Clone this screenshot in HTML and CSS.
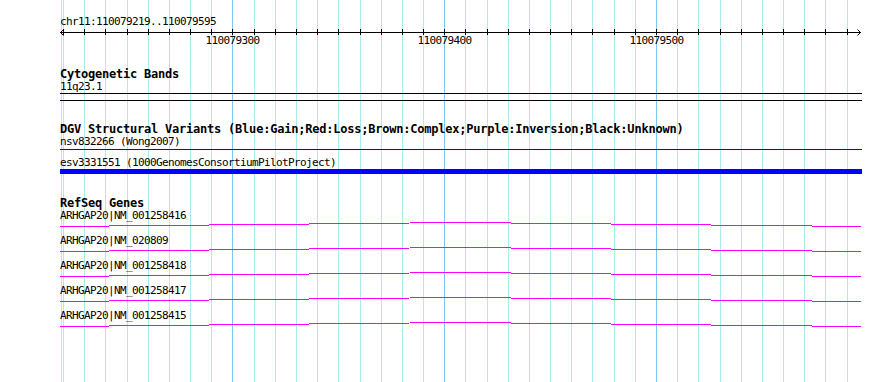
FILE: index.html
```html
<!DOCTYPE html>
<html lang="en">
  <head>
    <meta charset="UTF-8" />
    <meta name="viewport" content="width=device-width, initial-scale=1.0" />
    <title>chr11:110079219..110079595</title>

    <link rel="stylesheet" href="styles.css">
  </head>
  <body>
    <div class="panel">
      <!-- grid: one line every 10 bp, darker every 100 bp -->
      <svg class="grid" width="890" height="382" viewBox="0 0 890 382">
        <path class="minor" d="M61.5 0V382M63.5 0V382M84.5 0V382M105.5 0V382M127.5 0V382M148.5 0V382M169.5 0V382M190.5 0V382M211.5 0V382M254.5 0V382M275.5 0V382M296.5 0V382M317.5 0V382M338.5 0V382M360.5 0V382M381.5 0V382M402.5 0V382M423.5 0V382M465.5 0V382M487.5 0V382M508.5 0V382M529.5 0V382M550.5 0V382M571.5 0V382M592.5 0V382M614.5 0V382M635.5 0V382M677.5 0V382M698.5 0V382M720.5 0V382M741.5 0V382M762.5 0V382M783.5 0V382M804.5 0V382M825.5 0V382M847.5 0V382" />
        <path class="major" d="M232.5 0V382M444.5 0V382M656.5 0V382" />
      </svg>

      <div class="tracks">
        <div class="ruler-track">
          <div class="label">chr11:110079219..110079595</div>
          <svg class="ruler" width="802" height="19" viewBox="60 0 802 19">
            <path class="axis" d="M60 4.5H861" />
            <path class="axis" d="M63.5 1v6M84.5 1v6M105.5 1v6M127.5 1v6M148.5 1v6M169.5 1v6M190.5 1v6M211.5 1v6M232.5 1v6M254.5 1v6M275.5 1v6M296.5 1v6M317.5 1v6M338.5 1v6M360.5 1v6M381.5 1v6M402.5 1v6M423.5 1v6M444.5 1v6M465.5 1v6M487.5 1v6M508.5 1v6M529.5 1v6M550.5 1v6M571.5 1v6M592.5 1v6M614.5 1v6M635.5 1v6M656.5 1v6M677.5 1v6M698.5 1v6M720.5 1v6M741.5 1v6M762.5 1v6M783.5 1v6M804.5 1v6M825.5 1v6M847.5 1v6" />
            <path class="arrow" d="M63.5 1.5L60.5 4.5L63.5 7.5M857.5 1.5L860.5 4.5L857.5 7.5" />
            <text class="tick-label" x="232.5" y="16">110079300</text>
            <text class="tick-label" x="444.5" y="16">110079400</text>
            <text class="tick-label" x="656.5" y="16">110079500</text>
          </svg>
        </div>

        <section class="track cyto">
          <div class="title">Cytogenetic Bands</div>
          <div class="label">11q23.1</div>
          <div class="band"></div>
        </section>

        <section class="track dgv">
          <div class="title">DGV Structural Variants (Blue:Gain;Red:Loss;Brown:Complex;Purple:Inversion;Black:Unknown)</div>
          <div class="label">nsv832266 (Wong2007)</div>
          <div class="variant-row"><div class="variant-thin"></div></div>
          <div class="label">esv3331551 (1000GenomesConsortiumPilotProject)</div>
          <div class="variant-bar"></div>
        </section>

        <section class="track refseq">
          <div class="title">RefSeq Genes</div>
          <div class="gene">
            <div class="label">ARHGAP20|NM_001258416</div>
            <svg class="intron" width="802" height="13" viewBox="60 0 802 13"><polyline points="60,4.5 460,0.5 861,4.5" /></svg>
          </div>
          <div class="gene">
            <div class="label">ARHGAP20|NM_020809</div>
            <svg class="intron" width="802" height="13" viewBox="60 0 802 13"><polyline points="60,4.5 460,0.5 861,4.5" /></svg>
          </div>
          <div class="gene">
            <div class="label">ARHGAP20|NM_001258418</div>
            <svg class="intron" width="802" height="13" viewBox="60 0 802 13"><polyline points="60,4.5 460,0.5 861,4.5" /></svg>
          </div>
          <div class="gene">
            <div class="label">ARHGAP20|NM_001258417</div>
            <svg class="intron" width="802" height="13" viewBox="60 0 802 13"><polyline points="60,4.5 460,0.5 861,4.5" /></svg>
          </div>
          <div class="gene">
            <div class="label">ARHGAP20|NM_001258415</div>
            <svg class="intron" width="802" height="13" viewBox="60 0 802 13"><polyline points="60,4.5 460,0.5 861,4.5" /></svg>
          </div>
        </section>
      </div>
    </div>
  </body>
</html>
```

FILE: styles.css
```css
body {
  margin: 0;
  background-color: white;
}
.panel {
  position: relative;
  width: 890px;
  height: 382px;
  overflow: hidden;
  font-family: "DejaVu Sans Mono", "Liberation Mono", monospace;
  color: black;
}
.grid {
  position: absolute;
  left: 0;
  top: 0;
  shape-rendering: crispEdges;
}
.grid .minor {
  stroke: #abebf0;
  stroke-width: 1;
}
.grid .major {
  stroke: #7cc8ec;
  stroke-width: 1;
}
.tracks {
  position: relative;
  padding: 16px 0 0 60px;
}
.label {
  font-size: 11px;
  letter-spacing: -0.62px;
  line-height: 12px;
  height: 12px;
  white-space: nowrap;
}
.title {
  font-size: 12px;
  font-weight: bold;
  letter-spacing: -0.22px;
  line-height: 13px;
  height: 13px;
  white-space: nowrap;
}
.ruler {
  display: block;
  overflow: visible;
}
.ruler .axis {
  stroke: black;
  fill: none;
  shape-rendering: crispEdges;
}
.ruler .arrow {
  stroke: black;
  fill: none;
}
.tick-label {
  font-family: "DejaVu Sans Mono", "Liberation Mono", monospace;
  font-size: 11px;
  letter-spacing: -0.62px;
  text-anchor: middle;
  fill: black;
}

.cyto {
  margin-top: 21px;
}
.band {
  width: 802px;
  height: 6px;
  border-top: 1px solid black;
  border-bottom: 1px solid black;
}

.dgv {
  margin-top: 22px;
}
.variant-row {
  height: 8px;
}
.variant-thin {
  width: 802px;
  height: 1px;
  margin-top: 1px;
  background-color: #0000ff;
}
.variant-bar {
  width: 802px;
  height: 5px;
  background-color: #0000ff;
}

.refseq {
  margin-top: 23px;
}
.intron {
  display: block;
  shape-rendering: crispEdges;
}
.intron polyline {
  fill: none;
  stroke: #ff00ff;
  stroke-width: 1;
}
```
